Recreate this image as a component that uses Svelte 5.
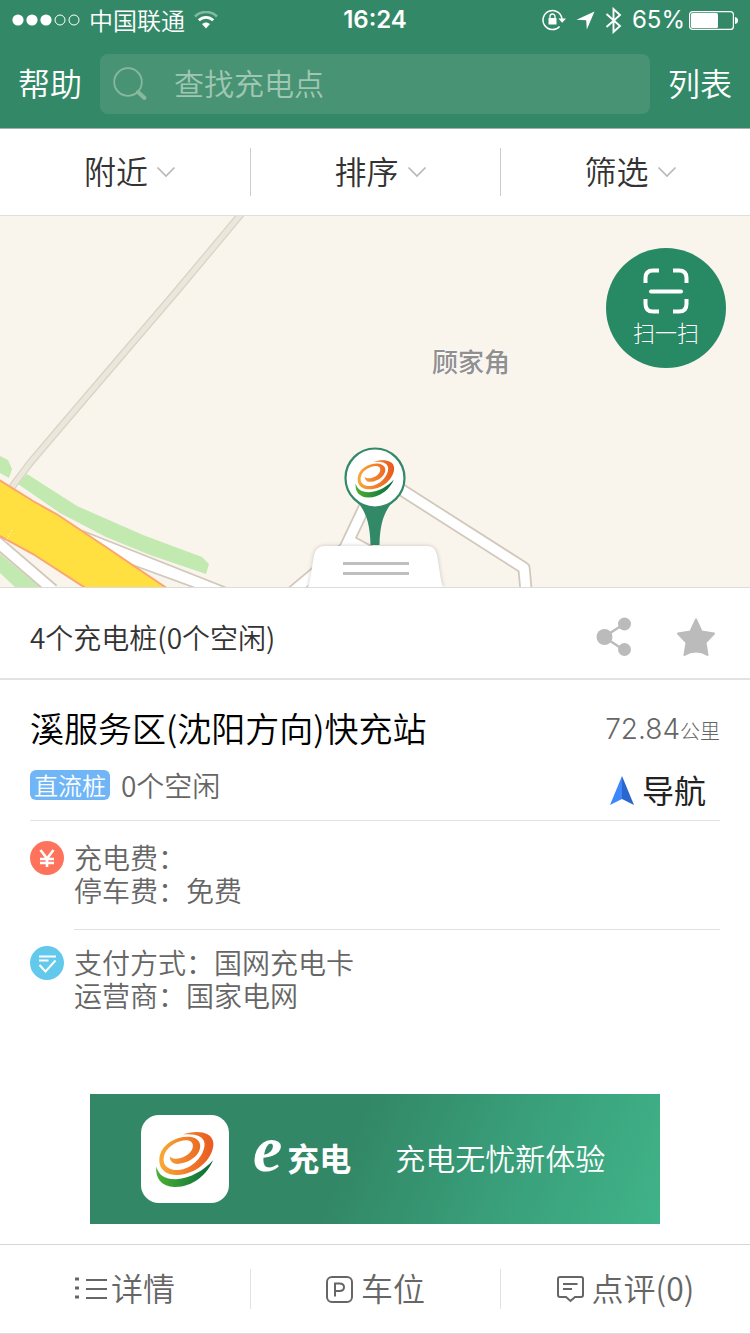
<script>
  const filters = ['附近', '排序', '筛选'];
  const fees = [
    { label: '充电费：', value: '' },
    { label: '停车费：', value: '免费' }
  ];
  const operations = [
    { label: '支付方式：', value: '国网充电卡' },
    { label: '运营商：', value: '国家电网' }
  ];
  let keyword = $state('');
</script>

{#snippet swirl(id)}
  <svg class="swirl" viewBox="226 138 182 178" aria-hidden="true">
    <defs>
      <linearGradient id="{id}-o" x1="0" y1="0" x2="1" y2="0">
        <stop offset="0" stop-color="#f9a936" />
        <stop offset="0.5" stop-color="#f07f2b" />
        <stop offset="1" stop-color="#e85a20" />
      </linearGradient>
      <linearGradient id="{id}-g" x1="0" y1="0" x2="1" y2="0">
        <stop offset="0" stop-color="#4cb034" />
        <stop offset="1" stop-color="#066a3b" />
      </linearGradient>
    </defs>
    <path fill="url(#{id}-o)" d="M310 152C345 138 401 139 404 178C406 226 350 277 290 276C250 275 232 250 240 215C250 180 290 157 330 159C365 162 372 190 355 212C338 235 300 247 283 240C275 236 271 230 270 219C280 229 300 228 318 218C340 205 348 185 335 173C315 161 270 180 256 208C242 240 260 262 295 261C340 258 378 215 377 180C375 155 345 148 310 152Z" />
    <path fill="url(#{id}-g)" d="M229 250C236 278 258 290 290 289C335 286 375 262 403 231C385 275 340 314 285 313C245 312 225 285 229 250Z" />
  </svg>
{/snippet}

<div class="page">
  <header>
    <div class="status">
      <div class="carrier">
        <svg width="68" height="12" viewBox="0 0 68 12" aria-hidden="true">
          <g fill="#fff"><circle cx="6" cy="6" r="5.6" /><circle cx="20" cy="6" r="5.6" /><circle cx="34" cy="6" r="5.6" /></g>
          <g fill="none" stroke="#fff"><circle cx="48" cy="6" r="5" /><circle cx="62" cy="6" r="5" /></g>
        </svg>
        <span>中国联通</span>
        <svg width="24" height="18" viewBox="0 0 24 18" aria-hidden="true">
          <path d="M1 5.5C7 -.5 17 -.5 23 5.5" fill="none" stroke="#fff" stroke-opacity=".4" stroke-width="2.6" />
          <path d="M4.800 9.300C9 5.300 15 5.300 19.200 9.300" fill="none" stroke="#fff" stroke-width="2.800" />
          <path d="M8 13C10.500 10.900 13.500 10.900 16 13L12 17.500Z" fill="#fff" />
        </svg>
      </div>
      <time>16:24</time>
      <div class="device">
        <svg width="24" height="22" viewBox="0 0 24 22" aria-hidden="true">
          <path d="M20 10.500A9.500 9.500 0 1 0 17.600 17.400" fill="none" stroke="#fff" stroke-width="1.500" />
          <path d="M16.300 9.500H24L20.200 13.800Z" fill="#fff" />
          <rect x="6.500" y="9" width="8" height="6.500" rx=".6" fill="#fff" />
          <path d="M8 9.500V7.500A2.500 2.500 0 0 1 13 7.500V9.500" fill="none" stroke="#fff" stroke-width="1.300" />
        </svg>
        <svg width="19" height="19" viewBox="0 0 19 19" aria-hidden="true"><path d="M18.500 .5L10.800 18.500L10.200 9.200L.5 8.800Z" fill="#fff" /></svg>
        <svg width="17" height="27" viewBox="0 0 17 27" aria-hidden="true"><path d="M1.500 7L15 19L8.500 25V2L15 8L1.500 20" fill="none" stroke="#fff" stroke-width="1.900" /></svg>
        <span>65%</span>
        <svg width="49" height="19" viewBox="0 0 49 19" aria-hidden="true">
          <rect x=".6" y=".6" width="43.800" height="17.800" rx="3" fill="none" stroke="#fff" stroke-width="1.200" />
          <rect x="2" y="2" width="27" height="15" rx="1.500" fill="#fff" />
          <path d="M46 6Q49 6.500 49 9.500T46 13Z" fill="#fff" />
        </svg>
      </div>
    </div>
    <div class="bar">
      <button class="text">帮助</button>
      <label class="search">
        <svg width="36" height="36" viewBox="0 0 36 36" aria-hidden="true">
          <circle cx="16" cy="16" r="13.800" fill="none" stroke="#88b89e" stroke-width="1.800" />
          <path d="M26 26L32.500 32" stroke="#88b89e" stroke-width="4" stroke-linecap="round" />
        </svg>
        <input type="text" placeholder="查找充电点" aria-label="查找充电点" bind:value={keyword} />
      </label>
      <button class="text">列表</button>
    </div>
  </header>

  <div class="filters">
    {#each filters as name}
      <button>
        <span class="label">{name}</span>
        <svg width="20" height="12" viewBox="0 0 20 12" aria-hidden="true"><path d="M1.500 1.500L10 10L18.500 1.500" fill="none" stroke="#b8b8b8" stroke-width="1.700" /></svg>
      </button>
    {/each}
  </div>

  <section class="map">
    <svg class="tiles" viewBox="0 0 750 371" preserveAspectRatio="xMidYMin slice" aria-hidden="true">
      <rect width="750" height="371" fill="#f9f4ec" />
      <path d="M242 -3L176 76L58 214L30 247L12 271" fill="none" stroke="#d8d5c5" stroke-width="7.500" />
      <path d="M242 -3L176 76L58 214L30 247L12 271" fill="none" stroke="#ebe7dd" stroke-width="5" />
      <path d="M0 240L8 244L12 253L9 262L0 257Z" fill="#c2e9b0" />
      <path d="M27 258L77 290L143 319L202 341L209 348L206 358L150 339L106 321L60 297L18 268Z" fill="#c2e9b0" />
      <path d="M0 338L40 371H15L0 357Z" fill="#c2e9b0" />
      <g fill="none" stroke-linejoin="round">
        <path d="M-10 320L53 374" stroke="#d2c7bb" stroke-width="13" />
        <path d="M-10 320L53 374" stroke="#fff" stroke-width="9.500" />
        <path d="M83 315L232 374H201L130 348L90 325Z" fill="#fff" stroke="#d2c7bb" stroke-width="1.700" />
        <path d="M290 378L345 332L372 275L397 271L524 352L526 374M350 325L380 341" stroke="#d2c7bb" stroke-width="13" />
        <path d="M290 378L345 332L372 275L397 271L524 352L526 374M350 325L380 341" stroke="#fff" stroke-width="9.500" />
      </g>
      <path d="M-4 262L33 285L58 299L103 329L168 373H87L33 338L0 320Z" fill="#ffe040" />
      <path d="M-4 262L33 285L58 299L103 329L168 373M87 373L33 338L-4 318" fill="none" stroke="#fba670" stroke-width="2" />
      <path d="M6 326L12 314" stroke="#fff" stroke-dasharray="1 2" />
    </svg>
    <span class="place">顾家角</span>
    <button class="scan">
      <svg width="46" height="46" viewBox="0 0 46 46" aria-hidden="true">
        <g fill="none" stroke="#fff" stroke-width="4">
          <path d="M2.500 15V10Q2.500 2.500 10 2.500H16M30 2.500H36Q43.500 2.500 43.500 10V15M43.500 31V36Q43.500 43.500 36 43.500H30M16 43.500H10Q2.500 43.500 2.500 36V31" />
          <path d="M8 23.500H38" stroke-linecap="round" />
        </g>
      </svg>
      扫一扫
    </button>
    <button class="pin" aria-label="充电站">
      <svg width="62" height="98" viewBox="0 0 62 98" aria-hidden="true">
        <path d="M12 53C20 63 26 72 26.500 98H35.500C36 72 42 63 50 53Z" fill="#328968" />
        <circle cx="31" cy="31" r="29.500" fill="#fff" stroke="#328968" stroke-width="2.200" />
      </svg>
      <span class="pin-logo">{@render swirl('pin')}</span>
    </button>
    <button class="handle" aria-label="展开">
      <svg width="142" height="50" viewBox="0 0 142 50" aria-hidden="true">
        <path class="tab" d="M3 50Q4 48 5 43L9 18Q11 9 20 9H122Q130 9 132 18L136 43Q137 48 138 50Z" fill="#fff" />
        <path d="M38 26.500H104M38 36.500H104" stroke="#bfbfbf" stroke-width="3" />
      </svg>
    </button>
  </section>

  <main>
    <div class="summary">
      <span>4个充电桩(0个空闲)</span>
      <button aria-label="分享">
        <svg width="36" height="40" viewBox="0 0 36 40" aria-hidden="true">
          <path d="M28 7L8 20L28 33" fill="none" stroke="#bbb" stroke-width="2.400" />
          <g fill="#bbb"><circle cx="8.500" cy="20" r="8" /><circle cx="28.500" cy="7" r="6.500" /><circle cx="28.500" cy="32.500" r="6.500" /></g>
        </svg>
      </button>
      <button aria-label="收藏">
        <svg width="40" height="40" viewBox="0 0 40 40" aria-hidden="true"><path d="M20 2.500L25.500 14.500L38 16.500L29.500 25.500L31.500 38Q20 31 8.500 38L10.500 25.500L2 16.500L14.500 14.500Z" fill="#bbb" stroke="#bbb" stroke-width="2" stroke-linejoin="round" /></svg>
      </button>
    </div>

    <div class="station">
      <div class="row title">
        <h1>溪服务区(沈阳方向)快充站</h1>
        <span class="distance">72.84<small>公里</small></span>
      </div>
      <div class="row">
        <span class="tag">直流桩</span>
        <span class="free">0个空闲</span>
        <button class="go">
          <svg width="24" height="30" viewBox="0 0 24 30" aria-hidden="true"><path d="M12 0L0 29L12 23Z" fill="#3b87fb" /><path d="M12 0L24 29L12 23Z" fill="#2a66cc" /></svg>
          <span class="label">导航</span>
        </button>
      </div>
    </div>

    <div class="info">
      <svg width="34" height="34" viewBox="0 0 34 34" aria-hidden="true">
        <circle cx="17" cy="17" r="17" fill="#ff735c" />
        <path d="M10.500 9L17 17.500L23.500 9M17 17.500V26M10 18H24M10 22H24" fill="none" stroke="#fff" stroke-width="2.600" />
      </svg>
      <dl class="lined">
        {#each fees as row}
          <div><dt>{row.label}</dt><dd>{row.value}</dd></div>
        {/each}
      </dl>
    </div>
    <div class="info operator">
      <svg width="34" height="34" viewBox="0 0 34 34" aria-hidden="true">
        <circle cx="17" cy="17" r="17" fill="#62c9ec" />
        <path d="M9 10.500H26M9 14.500H18.500M9.500 19L15.500 25.500L25.500 14.500" fill="none" stroke="#fff" stroke-width="2" />
      </svg>
      <dl>
        {#each operations as row}
          <div><dt>{row.label}</dt><dd>{row.value}</dd></div>
        {/each}
      </dl>
    </div>

    <div class="banner">
      <span class="tile">{@render swirl('tile')}</span>
      <span class="brand label"><em>e</em>充电</span>
      <span class="slogan label">充电无忧新体验</span>
    </div>
  </main>

  <nav>
    <button>
      <svg width="32" height="24" viewBox="0 0 32 24" aria-hidden="true">
        <path d="M0 2H4M0 11H4M0 20H4" stroke="#666" stroke-width="3" />
        <path d="M11 3H32M11 12H32M11 21H32" stroke="#666" stroke-width="2" />
      </svg>
      <span class="label tight">详情</span>
    </button>
    <button>
      <svg width="27" height="27" viewBox="0 0 27 27" aria-hidden="true">
        <rect x="1" y="1" width="25" height="25" rx="5" fill="none" stroke="#666" stroke-width="2" />
        <path d="M9 20.500V7.500H13.500Q18 7.500 18 11.200T13.500 15H9" fill="none" stroke="#666" stroke-width="2" />
      </svg>
      <span class="label">车位</span>
    </button>
    <button>
      <svg width="27" height="27" viewBox="0 0 27 27" aria-hidden="true">
        <path d="M3 1H24Q26 1 26 3V19Q26 21 24 21H18L13.500 25L9 21H3Q1 21 1 19V3Q1 1 3 1Z" fill="none" stroke="#666" stroke-width="2" />
        <path d="M6 8H20.500M6 13H15" stroke="#666" stroke-width="2" />
      </svg>
      <span class="label">点评(0)</span>
    </button>
  </nav>
</div>

<style>
  :global(body) {
    background: #fff;
  }
  .page {
    display: flex;
    flex-direction: column;
    min-height: 100vh;
    box-sizing: border-box;
    border-bottom: 1px solid #dedede;
    font-family: 'Noto Sans CJK SC', sans-serif;
    font-weight: 350;
    font-size: 28px;
    color: #333;
  }
  button {
    padding: 0;
    border: 0;
    background: none;
    font: inherit;
    color: inherit;
    cursor: pointer;
  }
  svg {
    display: block;
    flex: none;
  }
  .label {
    padding-bottom: 4px;
  }
  header {
    background: #338967;
    color: #fff;
    border-bottom: 1px solid #a5b0aa;
  }
  .status {
    display: grid;
    grid-template-columns: 1fr auto 1fr;
    align-items: center;
    height: 40px;
    padding: 0 12px;
    font-size: 24px;
    line-height: 40px;
  }
  .carrier,
  .device {
    display: flex;
    align-items: center;
    gap: 9px;
  }
  .device {
    justify-content: flex-end;
    gap: 10px;
    font-family: Inter, sans-serif;
    font-weight: 400;
  }
  .device span {
    margin-right: -6px;
  }
  time {
    font-family: Inter, sans-serif;
    font-weight: 600;
  }
  .bar {
    display: flex;
    align-items: center;
    gap: 18px;
    padding: 14px 18px;
  }
  .text {
    padding-bottom: 4px;
    font-size: 32px;
    line-height: 56px;
  }
  .search {
    flex: 1;
    display: flex;
    align-items: center;
    gap: 26px;
    height: 60px;
    padding: 0 12px;
    border-radius: 8px;
    background: #489373;
  }
  input {
    flex: 1;
    min-width: 0;
    padding: 0 0 4px;
    border: 0;
    outline: 0;
    background: none;
    font: inherit;
    font-size: 30px;
    color: #fff;
  }
  input::placeholder {
    color: #a0c7b3;
    opacity: 1;
  }
  .filters {
    display: grid;
    grid-template-columns: repeat(3, 1fr);
    padding: 19px 0;
    border-bottom: 1px solid #dedede;
  }
  .filters button {
    display: flex;
    align-items: center;
    justify-content: center;
    gap: 8px;
    height: 48px;
    padding-left: 10px;
    font-size: 32px;
  }
  .filters button + button,
  nav button + button {
    border-left: 1px solid #ccc;
  }
  .map {
    position: relative;
    overflow: hidden;
    height: 371px;
    border-bottom: 1px solid #dcdcdc;
  }
  .tiles {
    width: 100%;
    height: 100%;
  }
  .place {
    position: absolute;
    top: 128px;
    left: 50%;
    margin-left: 57px;
    font-size: 26px;
    line-height: 34px;
    font-weight: 500;
    color: #909090;
    text-shadow: 0 0 2px #fff, 0 0 2px #fff;
  }
  .scan {
    position: absolute;
    top: 32px;
    right: 24px;
    display: flex;
    flex-direction: column;
    align-items: center;
    gap: 2px;
    width: 120px;
    height: 120px;
    padding-top: 20px;
    border-radius: 50%;
    background: #288965;
    color: #fff;
    font-size: 22px;
    font-weight: 300;
    line-height: 30px;
  }
  .pin {
    position: absolute;
    top: 231px;
    left: 50%;
    margin-left: -31px;
  }
  .pin-logo {
    position: absolute;
    top: 12px;
    left: 11px;
    width: 40px;
  }
  .swirl {
    width: 100%;
  }
  .handle {
    position: absolute;
    bottom: 0;
    left: 50%;
    margin-left: -70px;
  }
  .tab {
    filter: drop-shadow(0 0 2px rgba(0, 0, 0, 0.2));
  }
  .summary {
    display: flex;
    align-items: center;
    gap: 44px;
    height: 82px;
    padding: 8px 34px 0 30px;
    border-bottom: 2px solid #e2e2e2;
  }
  .summary span {
    flex: 1;
  }
  .station {
    margin: 0 30px;
    padding: 22px 0 9px;
    border-bottom: 1px solid #e2e2e2;
  }
  .row {
    display: flex;
    align-items: center;
    gap: 11px;
  }
  .title {
    justify-content: space-between;
    height: 50px;
    margin-bottom: 7px;
  }
  h1 {
    margin: 0;
    font-size: 34px;
    font-weight: inherit;
    color: #000;
  }
  .distance {
    padding-top: 4px;
    font-family: Inter, 'Noto Sans CJK SC', sans-serif;
    font-weight: 300;
    color: #666;
  }
  small {
    font-size: 20px;
  }
  .tag {
    padding: 0 4px;
    border-radius: 6px;
    background: #70b6f7;
    color: #fff;
    font-size: 24px;
    line-height: 30px;
  }
  .free {
    color: #666;
  }
  .go {
    display: flex;
    align-items: center;
    gap: 8px;
    margin-left: auto;
    padding: 12px 14px 0 0;
    font-size: 32px;
    line-height: 36px;
    font-weight: 400;
    color: #222;
  }
  .info {
    display: flex;
    gap: 10px;
    margin: 0 30px;
    padding-top: 16px;
    color: #666;
  }
  .operator {
    padding-top: 12px;
  }
  .info > svg {
    margin-top: 4px;
  }
  dl {
    flex: 1;
    margin: 0;
    padding: 4px 0 22px;
    line-height: 33px;
  }
  .lined {
    border-bottom: 1px solid #e2e2e2;
  }
  dl div {
    display: flex;
  }
  dd {
    margin: 0;
  }
  .banner {
    display: flex;
    align-items: center;
    margin: 60px 90px 20px;
    padding: 21px 51px;
    background: linear-gradient(112deg, #328766 45%, #399f7a 72%, #40b389);
    color: #fff;
  }
  .tile {
    width: 60px;
    padding: 15px 14px;
    border-radius: 18px;
    background: #fff;
  }
  .tile .swirl {
    height: 58px;
  }
  .brand {
    margin-left: 24px;
    font-size: 32px;
    font-weight: 700;
    line-height: 58px;
  }
  em {
    margin-right: 5px;
    font-family: 'Liberation Serif', serif;
    font-size: 66px;
    line-height: 32px;
  }
  .slogan {
    margin-left: 44px;
    font-size: 30px;
  }
  nav {
    display: grid;
    grid-template-columns: repeat(3, 1fr);
    margin-top: auto;
    padding: 24px 0;
    border-top: 1px solid #d6d6d6;
  }
  nav button {
    display: flex;
    align-items: center;
    justify-content: center;
    gap: 8px;
    height: 40px;
    font-size: 32px;
    color: #666;
  }
  nav .tight {
    margin-left: -4px;
  }
  nav button + button {
    border-color: #e2e2e2;
  }
</style>
